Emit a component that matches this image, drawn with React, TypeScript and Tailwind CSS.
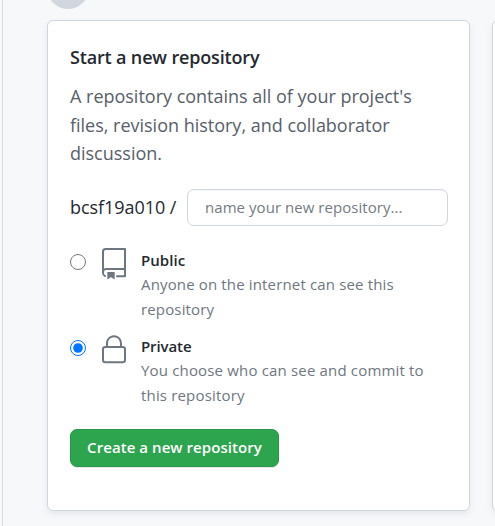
import React from "react";

function RepoIcon() {
  return (
    <svg className="ml-3 h-8 w-8 shrink-0 fill-[#6e7781]" viewBox="0 0 24 24" aria-hidden="true">
      <path
        fillRule="evenodd"
        d="M3 2.75A2.75 2.75 0 015.75 0h14.5a.75.75 0 01.75.75v20.5a.75.75 0 01-.75.75h-6a.75.75 0 010-1.5h5.25v-4H6A1.5 1.5 0 004.5 18v.75c0 .716.43 1.334 1.05 1.605a.75.75 0 01-.6 1.374A3.25 3.25 0 013 18.75v-16zM19.5 1.5V15H6c-.546 0-1.059.146-1.5.401V2.75c0-.69.56-1.25 1.25-1.25H19.5z"
      />
      <path d="M7 18.25a.25.25 0 01.25-.25h5a.25.25 0 01.25.25v5.01a.25.25 0 01-.397.201l-2.206-1.604a.25.25 0 00-.294 0L7.397 23.46a.25.25 0 01-.397-.2v-5.01z" />
    </svg>
  );
}

function LockIcon() {
  return (
    <svg className="ml-3 h-8 w-8 shrink-0 fill-[#6e7781]" viewBox="0 0 24 24" aria-hidden="true">
      <path
        fillRule="evenodd"
        d="M6 9V7.25C6 3.845 8.503 1 12 1s6 2.845 6 6.25V9h.5a2.5 2.5 0 012.5 2.5v8a2.5 2.5 0 01-2.5 2.5h-13A2.5 2.5 0 013 19.5v-8A2.5 2.5 0 015.5 9H6zm1.5-1.75C7.5 4.58 9.422 2.5 12 2.5c2.578 0 4.5 2.08 4.5 4.75V9h-9V7.25zm-3 4.25a1 1 0 011-1h13a1 1 0 011 1v8a1 1 0 01-1 1h-13a1 1 0 01-1-1v-8z"
      />
    </svg>
  );
}

export default function App() {
  return (
    <div className="flex h-[526px] w-[495px] overflow-hidden bg-[#f6f8fa] font-['Open_Sans','Noto_Sans',sans-serif] text-[#24292f]">
      <div className="w-[3px] shrink-0 border-r border-[#d8dee4]" />
      <div className="flex w-[492px] shrink-0 flex-col pl-11">
        <div className="flex h-5 shrink-0 items-end pb-[11px]">
          <div className="h-[42px] w-[42px] shrink-0 rounded-full bg-[#d0d7de]" />
        </div>
        <div className="flex gap-[22px]">
          <section className="h-[491px] w-[423px] shrink-0 rounded-md border border-[#d0d7de] bg-white pt-[22px] pr-[21px] pl-[22px] shadow-[0_3px_6px_rgba(140,149,159,0.15)]">
            <h2 className="text-[18px] leading-7 font-semibold tracking-[-0.16px] whitespace-nowrap">Start a new repository</h2>
            <p className="mt-[11px] text-[18px] leading-[28.5px] tracking-[-0.01px] whitespace-nowrap text-[#57606a]">
              A repository contains all of your project's
              <br />
              files, revision history, and collaborator
              <br />
              discussion.
            </p>
            <div className="mt-[21px] flex items-center">
              <span className="w-[117px] shrink-0 text-[18px] leading-7 tracking-[-0.05px] whitespace-nowrap">bcsf19a010 /</span>
              <input
                type="text"
                placeholder="name your new repository..."
                className="h-[37px] w-[261px] rounded-[7px] border border-[#d0d7de] bg-white px-[17px] text-[15px] tracking-[0.05px] shadow-[inset_0_1px_0_rgba(208,215,222,0.2)] placeholder:text-[#757b82]"
              />
            </div>
            <label className="mt-[22px] flex h-[86px] items-start">
              <input type="radio" name="visibility" className="mt-[6px] h-4 w-4 shrink-0" />
              <RepoIcon />
              <span className="ml-[11px] text-[15px] leading-[24.5px] whitespace-nowrap">
                <span className="block font-semibold tracking-[0.05px]">Public</span>
                <span className="block tracking-[0.15px] text-[#6e7781]">
                  Anyone on the internet can see this
                  <br />
                  repository
                </span>
              </span>
            </label>
            <label className="flex h-[86px] items-start">
              <input type="radio" name="visibility" defaultChecked className="mt-[6px] h-4 w-4 shrink-0" />
              <LockIcon />
              <span className="ml-[11px] text-[15px] leading-[24.5px] whitespace-nowrap">
                <span className="block font-semibold tracking-[-0.1px]">Private</span>
                <span className="block tracking-[0.17px] text-[#6e7781]">
                  You choose who can see and commit to
                  <br />
                  this repository
                </span>
              </span>
            </label>
            <button
              type="button"
              className="mt-[9px] h-[38px] w-[209px] rounded-[7px] border border-[#2a964a] bg-[#2da44e] text-[15px] font-semibold tracking-[0.06px] whitespace-nowrap text-white shadow-[0_1px_0_rgba(27,31,36,0.1)]"
            >
              Create a new repository
            </button>
          </section>
          <section className="h-[491px] w-[423px] shrink-0 rounded-md border border-[#d0d7de] bg-white shadow-[0_3px_6px_rgba(140,149,159,0.15)]" />
        </div>
      </div>
    </div>
  );
}
